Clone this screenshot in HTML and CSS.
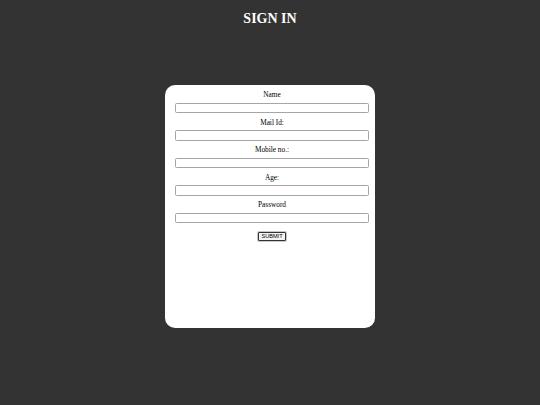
FILE: index.html
```html
<!DOCTYPE html>
<html>
<head>
<meta charset="utf-8">
<link rel="stylesheet" href="styles.css">
</head>
<body>
<h1 class="title">SIGN IN</h1>
<div class="card">
  <form class="form">
    <label class="label">Name</label>
    <input class="field" type="text">
    <label class="label">Mail Id:</label>
    <input class="field" type="text">
    <label class="label">Mobile no.:</label>
    <input class="field" type="text">
    <label class="label">Age:</label>
    <input class="field" type="text">
    <label class="label">Password</label>
    <input class="field" type="password">
    <button class="submit" type="button">SUBMIT</button>
  </form>
</div>
</body>
</html>
```

FILE: styles.css
```css
html, body {
  margin: 0;
  padding: 0;
  background: #333333;
  height: 100%;
}
body {
  font-family: "Liberation Serif", "Times New Roman", serif;
}
.title {
  margin: 0;
  padding-top: 11px;
  font-size: 14px;
  line-height: 16px;
  font-weight: bold;
  color: #ffffff;
  text-align: center;
}
.card {
  width: 210px;
  height: 243px;
  margin: 58px auto 0;
  background: #ffffff;
  border-radius: 10px;
  box-sizing: border-box;
  padding: 0.5px 0 0 4px;
}
.form {
  display: flex;
  flex-direction: column;
  align-items: center;
  margin: 0;
}
.label {
  display: block;
  font-size: 7.3px;
  line-height: 10px;
  height: 10px;
  color: #000;
  margin-top: 3.5px;
  margin-bottom: 3.5px;
  padding-top: 1px;
  box-sizing: border-box;
}
.field {
  display: block;
  width: 194px;
  height: 10.5px;
  box-sizing: border-box;
  border: 1px solid #a6a6a6;
  border-radius: 1.5px;
  padding: 0;
  margin: 0;
  background: #fff;
}
.submit {
  margin-top: 9px;
  width: 28px;
  height: 9px;
  box-sizing: border-box;
  padding: 0;
  font-family: "Liberation Sans", Arial, sans-serif;
  font-size: 5.6px;
  line-height: 7px;
  color: #000;
  background: #f4f4f4;
  border: 1px solid #333;
  border-radius: 1px;
  box-shadow: 0 0 0 1px #c8c8c8;
}
```
